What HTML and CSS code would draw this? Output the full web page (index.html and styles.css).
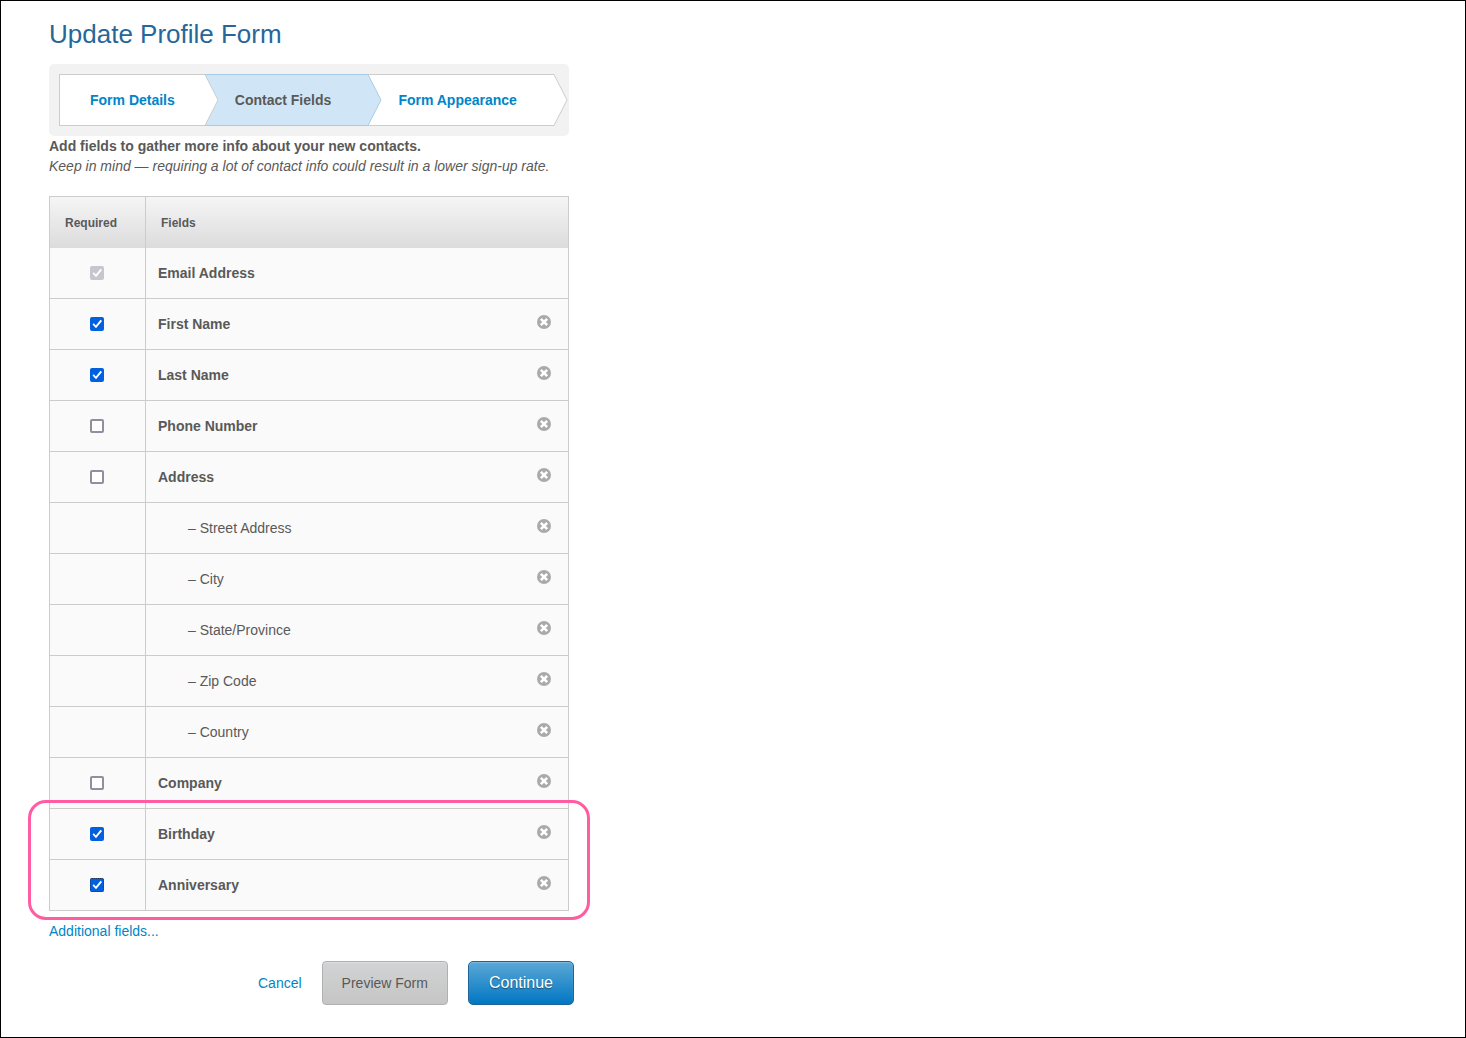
FILE: index.html
```
<!DOCTYPE html>
<html lang="en">
<head>
  <meta charset="UTF-8" />
  <meta name="viewport" content="width=device-width, initial-scale=1.0"/>
  <title>Update Profile Form</title>
  <link rel="stylesheet" href="styles.css">
</head>
<body>

<svg class="icon-defs" width="0" height="0" aria-hidden="true">
  <symbol id="icon-remove" viewBox="0 0 14 14">
    <circle cx="7" cy="7" r="7" fill="#aaaaaa"/>
    <path d="M4.8 4.8 L9.2 9.2 M9.2 4.8 L4.8 9.2" stroke="#ffffff" stroke-width="2.6" stroke-linecap="square"/>
  </symbol>
</svg>

<main class="page">
  <h1>Update Profile Form</h1>

  <nav class="steps" aria-label="Form steps">
    <ol>
      <li class="step">
        <a href="#">Form Details</a>
        <svg class="arrow" viewBox="0 0 14 52"><path d="M0 0.5 L13 26 L0 51.5"/></svg>
      </li>
      <li class="step active">
        <a href="#" aria-current="step">Contact Fields</a>
        <svg class="arrow" viewBox="0 0 14 52"><path d="M0 0.5 L13 26 L0 51.5"/></svg>
      </li>
      <li class="step">
        <a href="#">Form Appearance</a>
        <svg class="arrow" viewBox="0 0 14 52"><path d="M0 0.5 L13 26 L0 51.5"/></svg>
      </li>
    </ol>
  </nav>

  <p class="intro">
    <strong>Add fields to gather more info about your new contacts.</strong><br>
    <em>Keep in mind — requiring a lot of contact info could result in a lower sign-up rate.</em>
  </p>

  <form>
    <div class="table-wrap">
      <table class="fields">
        <thead>
          <tr>
            <th class="required">Required</th>
            <th class="name" colspan="2">Fields</th>
          </tr>
        </thead>
        <tbody>
          <tr>
            <td class="required"><input type="checkbox" id="email" checked disabled></td>
            <td class="name"><label for="email">Email Address</label></td>
            <td class="remove"></td>
          </tr>
          <tr>
            <td class="required"><input type="checkbox" id="firstName" checked></td>
            <td class="name"><label for="firstName">First Name</label></td>
            <td class="remove"><button type="button" aria-label="Remove First Name"><svg><use href="#icon-remove"/></svg></button></td>
          </tr>
          <tr>
            <td class="required"><input type="checkbox" id="lastName" checked></td>
            <td class="name"><label for="lastName">Last Name</label></td>
            <td class="remove"><button type="button" aria-label="Remove Last Name"><svg><use href="#icon-remove"/></svg></button></td>
          </tr>
          <tr>
            <td class="required"><input type="checkbox" id="phone"></td>
            <td class="name"><label for="phone">Phone Number</label></td>
            <td class="remove"><button type="button" aria-label="Remove Phone Number"><svg><use href="#icon-remove"/></svg></button></td>
          </tr>
          <tr>
            <td class="required"><input type="checkbox" id="address"></td>
            <td class="name"><label for="address">Address</label></td>
            <td class="remove"><button type="button" aria-label="Remove Address"><svg><use href="#icon-remove"/></svg></button></td>
          </tr>
          <tr>
            <td class="required"></td>
            <td class="name sub">– Street Address</td>
            <td class="remove"><button type="button" aria-label="Remove Street Address"><svg><use href="#icon-remove"/></svg></button></td>
          </tr>
          <tr>
            <td class="required"></td>
            <td class="name sub">– City</td>
            <td class="remove"><button type="button" aria-label="Remove City"><svg><use href="#icon-remove"/></svg></button></td>
          </tr>
          <tr>
            <td class="required"></td>
            <td class="name sub">– State/Province</td>
            <td class="remove"><button type="button" aria-label="Remove State/Province"><svg><use href="#icon-remove"/></svg></button></td>
          </tr>
          <tr>
            <td class="required"></td>
            <td class="name sub">– Zip Code</td>
            <td class="remove"><button type="button" aria-label="Remove Zip Code"><svg><use href="#icon-remove"/></svg></button></td>
          </tr>
          <tr>
            <td class="required"></td>
            <td class="name sub">– Country</td>
            <td class="remove"><button type="button" aria-label="Remove Country"><svg><use href="#icon-remove"/></svg></button></td>
          </tr>
          <tr>
            <td class="required"><input type="checkbox" id="company"></td>
            <td class="name"><label for="company">Company</label></td>
            <td class="remove"><button type="button" aria-label="Remove Company"><svg><use href="#icon-remove"/></svg></button></td>
          </tr>
          <tr>
            <td class="required"><input type="checkbox" id="birthday" checked></td>
            <td class="name"><label for="birthday">Birthday</label></td>
            <td class="remove"><button type="button" aria-label="Remove Birthday"><svg><use href="#icon-remove"/></svg></button></td>
          </tr>
          <tr>
            <td class="required"><input type="checkbox" id="anniversary" class="focused" checked></td>
            <td class="name"><label for="anniversary">Anniversary</label></td>
            <td class="remove"><button type="button" aria-label="Remove Anniversary"><svg><use href="#icon-remove"/></svg></button></td>
          </tr>
        </tbody>
      </table>
      <div class="highlight"></div>
    </div>

    <a class="more" href="#">Additional fields...</a>

    <div class="actions">
      <a href="#">Cancel</a>
      <button type="button" class="btn">Preview Form</button>
      <button type="submit" class="btn btn-primary">Continue</button>
    </div>
  </form>
</main>

</body>
</html>
```
FILE: styles.css
```
* {
  box-sizing: border-box;
}

body {
  margin: 0;
  min-height: 100vh;
  border: 1px solid #000;
  background-color: #fff;
  color: #595959;
  font-family: "Liberation Sans", Arial, sans-serif;
  font-size: 14px;
  line-height: 20px;
}

a {
  color: #0085c8;
  text-decoration: none;
}

.icon-defs {
  position: absolute;
}

.page {
  max-width: 568px;
  padding: 13px 0 32px 48px;
}

h1 {
  margin: 0 0 10px;
  color: #26679b;
  font-size: 26px;
  font-weight: normal;
  line-height: 40px;
}

/* step bar */
.steps {
  padding: 10px 15px 10px 10px;
  background-color: #f2f2f2;
  border-radius: 5px;
}

.steps ol {
  display: flex;
  margin: 0;
  padding: 0;
  list-style: none;
}

.step {
  position: relative;
  flex-grow: 1;
  border: 1px solid #ccc;
  border-width: 1px 0;
  background-color: #fff;
}

.step:first-child {
  flex-grow: 0;
  border-left-width: 1px;
}

.step a {
  display: block;
  padding: 15px 30px;
  font-weight: bold;
}

.step.active {
  background-color: #d0e6f6;
  border-color: #a8cde8;
}

.step.active a {
  color: #595959;
}

/* arrow tip lies over the start of the next step */
.arrow {
  position: absolute;
  top: -1px;
  left: 100%;
  z-index: 1;
  width: 14px;
  height: 52px;
  fill: #fff;
  stroke: #ccc;
}

.active .arrow {
  fill: #d0e6f6;
  stroke: #a8cde8;
}

.intro {
  margin: 0 0 20px;
}

/* fields table */
.table-wrap {
  position: relative;
}

.fields {
  width: 100%;
  border: 1px solid #ccc;
  border-bottom: 0;
  border-spacing: 0;
}

.fields th {
  height: 51px;
  padding: 0 15px;
  font-size: 12px;
  text-align: left;
}

.fields thead {
  background: linear-gradient(#f5f5f5, #dcdcdc);
}

.fields td {
  height: 51px;
  padding: 0 12px;
  background-color: #fafafa;
  border-bottom: 1px solid #ccc;
}

.fields .required {
  width: 96px;
  border-right: 1px solid #ccc;
}

.fields td.required {
  padding-right: 13px;
}

.fields td.name {
  font-weight: bold;
}

.fields td.sub {
  padding-left: 42px;
  font-weight: normal;
}

.fields td.remove {
  width: 48px;
  padding: 0 17px 4px;
}

.remove button {
  display: block;
  padding: 0;
  border: 0;
  background: none;
  cursor: pointer;
}

.remove svg {
  display: block;
  width: 14px;
  height: 14px;
}

input[type="checkbox"] {
  appearance: none;
  display: block;
  width: 14px;
  height: 14px;
  margin: 0 auto;
  border: 2px solid #8f8f9d;
  border-radius: 2px;
  background-color: #fff;
}

input[type="checkbox"]:checked {
  border: 0;
  background-color: #0060df;
}

input[type="checkbox"]:checked::before {
  content: "";
  display: block;
  width: 14px;
  height: 14px;
  background-color: #fff;
  clip-path: polygon(18% 54%, 27% 45%, 42% 60%, 75% 20%, 86% 29%, 43% 80%);
}

input[type="checkbox"]:disabled {
  background-color: #c6c6cc;
}

input[type="checkbox"].focused {
  outline: 1px dotted #223a5e;
  outline-offset: -1px;
}

.highlight {
  position: absolute;
  right: -21px;
  bottom: -9px;
  left: -21px;
  height: 120px;
  border: 3px solid #ff5ca2;
  border-radius: 18px;
  pointer-events: none;
}

.more {
  display: block;
  margin-top: 10px;
}

/* buttons */
.actions {
  display: flex;
  justify-content: flex-end;
  align-items: center;
  gap: 20px;
  margin: 20px -5px 0 0;
}

.btn {
  height: 44px;
  padding: 0 19px;
  border: 1px solid #b0b0b0;
  border-radius: 4px;
  background: linear-gradient(#d2d3d4, #c5c5c5);
  box-shadow: inset 0 1px 1px #dedede;
  color: #595959;
  font-family: inherit;
  font-size: 14px;
  cursor: pointer;
}

.btn-primary {
  padding: 0 20px;
  border-color: #1f6499;
  border-radius: 5px;
  background: linear-gradient(#5ba8d6, #0077c2);
  box-shadow: inset 0 1px 1px #7dbbe0;
  color: #fff;
  font-size: 16px;
  text-shadow: 0 1px 1px #1f4c70;
}
```
